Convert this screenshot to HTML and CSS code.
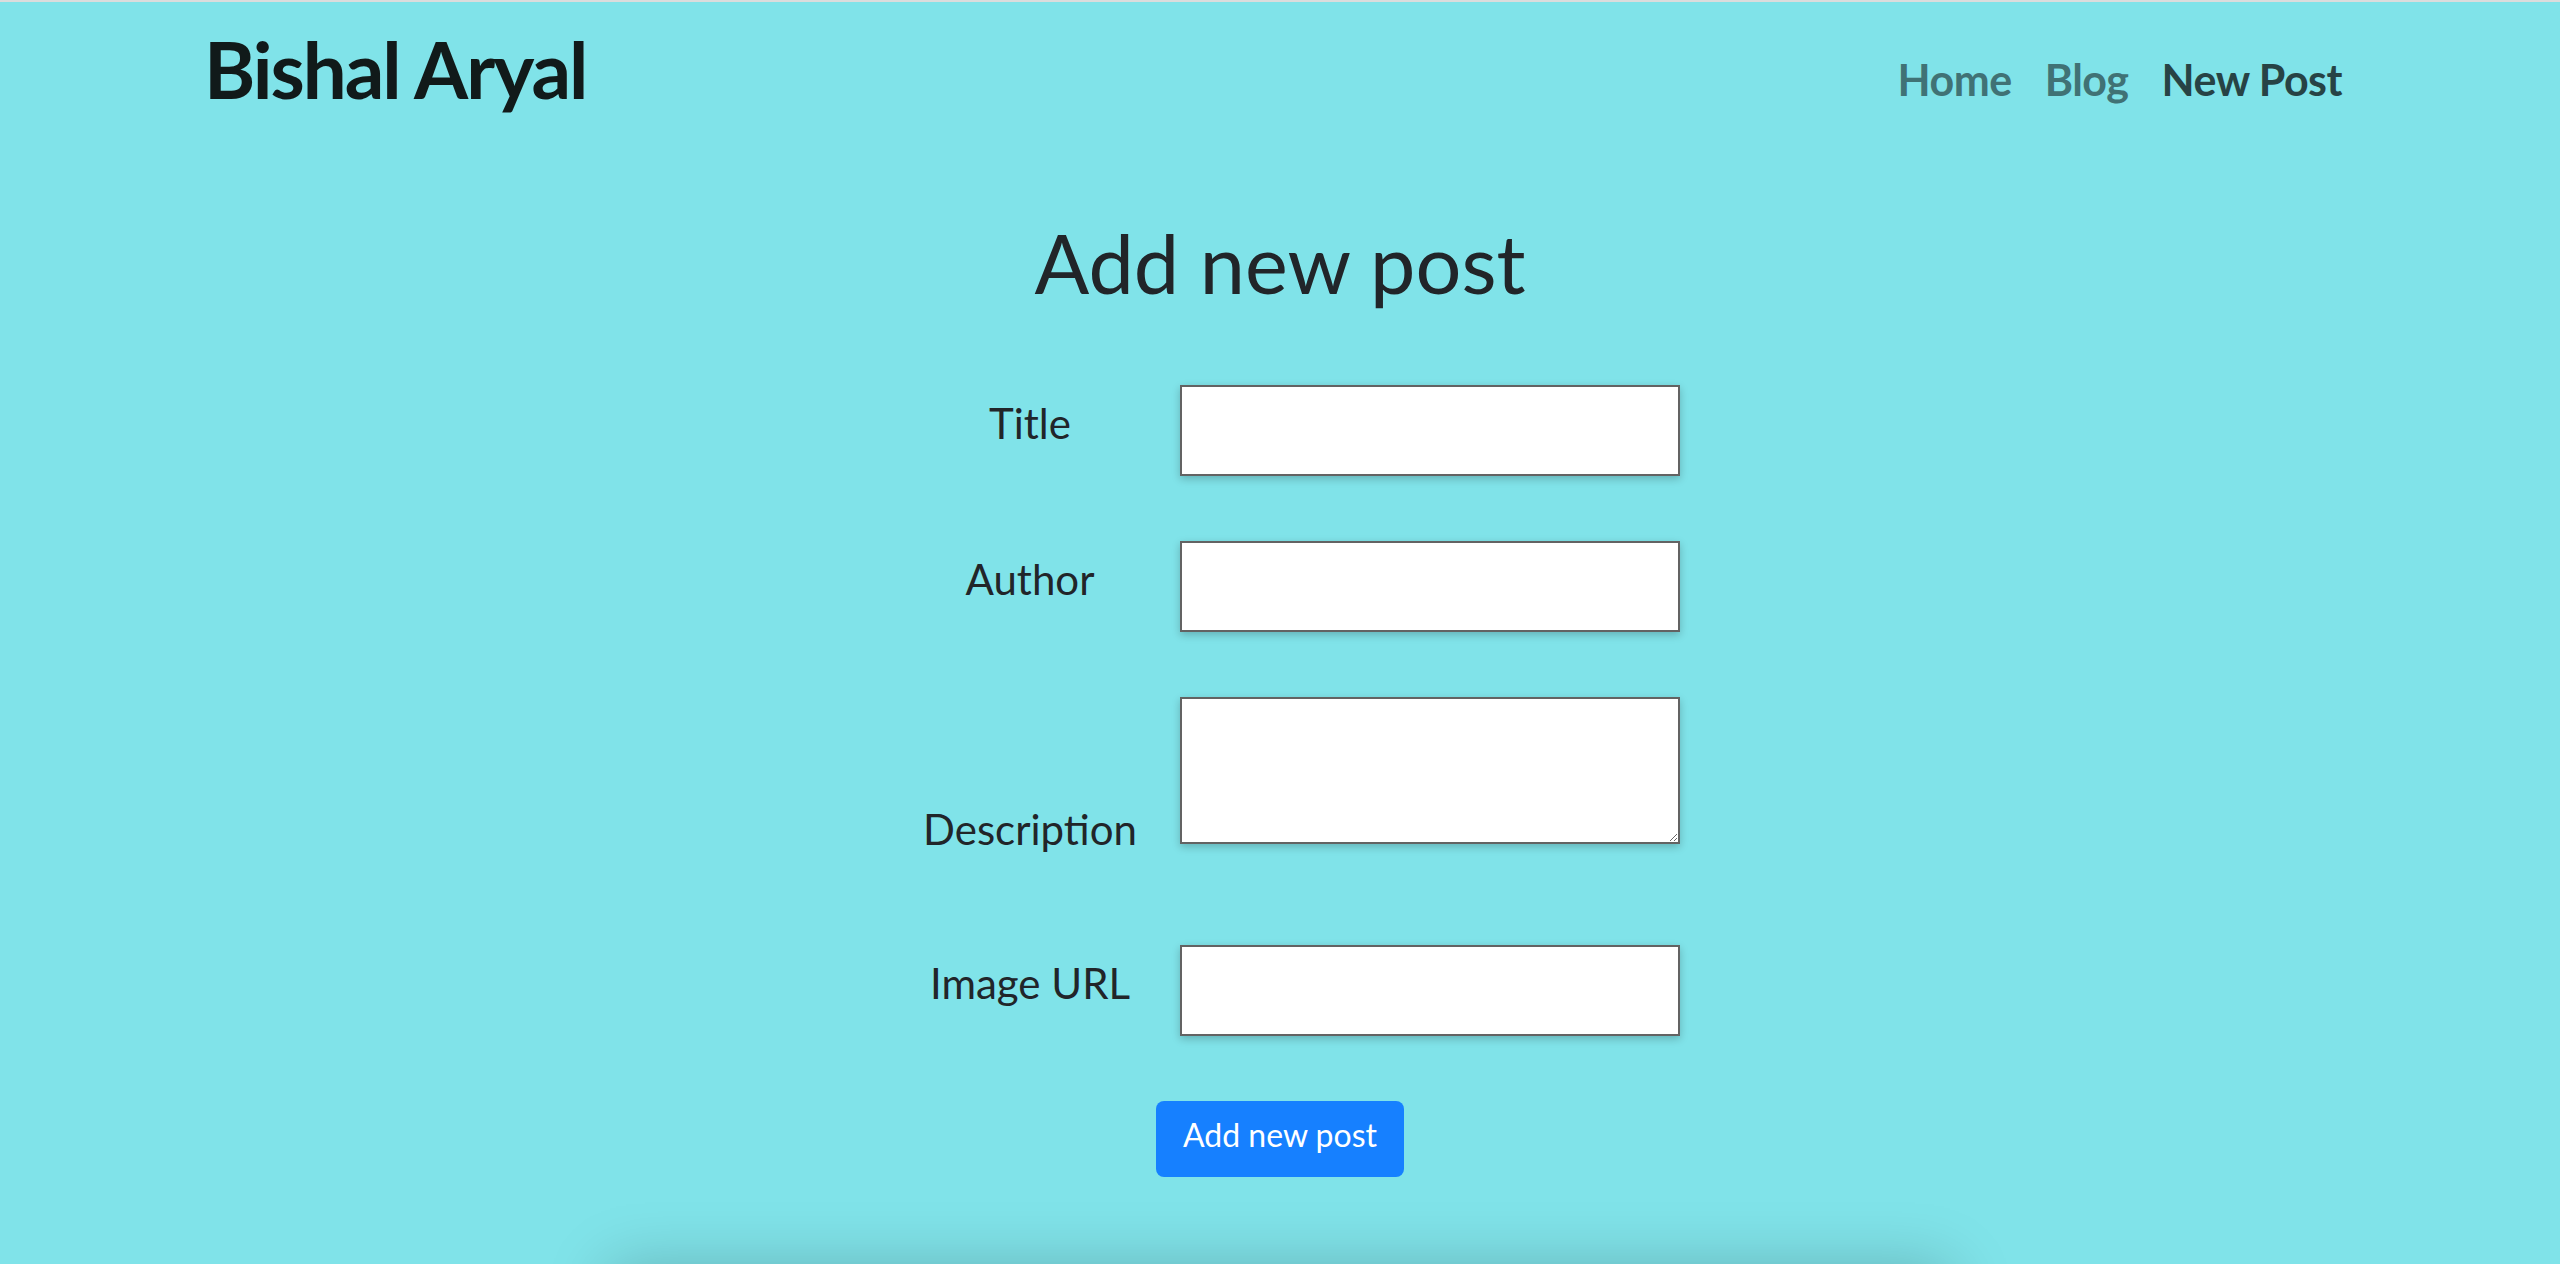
FILE: index.html
```html
<!DOCTYPE html>
<html lang="en">
<head>
<meta charset="utf-8">
<title>Add new post</title>
<link rel="stylesheet" href="styles.css">
</head>
<body>
<div class="page">
  <header class="site-header">
    <a class="brand" href="#">Bishal Aryal</a>
    <nav class="nav">
      <a class="nav-link" href="#">Home</a>
      <a class="nav-link" href="#">Blog</a>
      <a class="nav-link active" href="#">New Post</a>
    </nav>
  </header>

  <main class="main">
    <h1 class="page-title">Add new post</h1>
    <form class="post-form">
      <label class="field-label" for="title">Title</label>
      <input class="field-input" id="title" type="text">

      <label class="field-label" for="author">Author</label>
      <input class="field-input" id="author" type="text">

      <label class="field-label field-label-bottom" for="description">Description</label>
      <textarea class="field-input field-textarea" id="description"></textarea>

      <label class="field-label" for="image">Image URL</label>
      <input class="field-input" id="image" type="text">

      <div class="form-actions">
        <button class="btn-primary" type="button">Add new post</button>
      </div>
    </form>
    <section class="posts-card"></section>
  </main>
</div>
</body>
</html>
```

FILE: styles.css
```css
html, body {
  margin: 0;
  padding: 0;
  height: 100%;
  overflow: hidden;
}

body {
  background: #80e3e9;
  font-family: Lato, "Noto Sans", sans-serif;
  color: #212529;
}

.page {
  height: 1264px;
  overflow: hidden;
  border-top: 2px solid #dcdcdc;
  box-sizing: border-box;
}

.site-header {
  display: flex;
  justify-content: space-between;
  align-items: flex-start;
  padding: 21px 218px 0 204px;
}

.brand {
  font-size: 78px;
  font-weight: 700;
  line-height: 93.6px;
  color: #111a1a;
  text-decoration: none;
  letter-spacing: -2px;
}

.nav {
  display: flex;
  gap: 33px;
  margin-top: 31px;
}

.nav-link {
  font-size: 43px;
  font-weight: 700;
  line-height: 52px;
  color: #407275;
  text-decoration: none;
  letter-spacing: -0.5px;
}

.nav-link.active {
  color: #274345;
}

.main {
  display: flex;
  flex-direction: column;
  align-items: center;
}

.page-title {
  margin: 97px 0 0;
  font-size: 81px;
  font-weight: 400;
  line-height: 97px;
  color: #212529;
}

.post-form {
  display: grid;
  grid-template-columns: 230px 500px;
  column-gap: 35px;
  row-gap: 65px;
  padding-left: 35px;
  margin-top: 74px;
}

.field-label {
  text-align: center;
  font-size: 42px;
  line-height: 50.4px;
  margin-top: 13px;
  color: #212529;
}

.field-label-bottom {
  margin-top: 107px;
}

.field-input {
  box-sizing: border-box;
  width: 500px;
  height: 91px;
  margin: 0;
  border: 2px solid #636363;
  background: #fff;
  box-shadow: 0 3px 8px rgba(0, 0, 0, 0.22);
  font-size: 20px;
  outline: none;
}

.field-textarea {
  height: 147px;
  margin-bottom: 36px;
  resize: both;
  display: block;
}

.form-actions {
  grid-column: 1 / -1;
  display: flex;
  justify-content: center;
  margin-left: -35px;
}

.btn-primary {
  width: 248px;
  height: 76px;
  box-sizing: border-box;
  padding: 15px 0 22px;
  border: none;
  border-radius: 8px;
  background: #1680ff;
  color: #fff;
  font-family: Lato, "Noto Sans", sans-serif;
  font-size: 32px;
  line-height: 38.4px;
  text-align: center;
}

.posts-card {
  width: 1300px;
  height: 400px;
  margin-top: 110px;
  background: #80e3e9;
  box-shadow: 0 0 60px 20px rgba(0, 0, 0, 0.22);
}
```
